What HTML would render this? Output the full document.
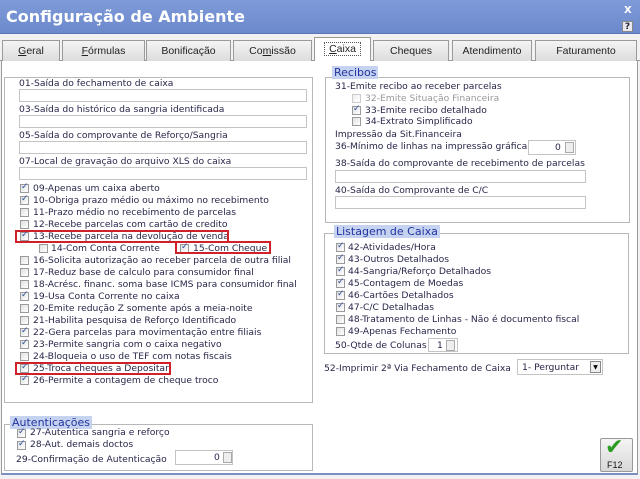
<!DOCTYPE html>
<html><head><meta charset="utf-8"><style>
*{margin:0;padding:0;box-sizing:border-box}
body{width:640px;height:479px;position:relative;overflow:hidden;background:#fff;font-family:"DejaVu Sans","Liberation Sans",sans-serif;font-size:9.2px;color:#27274a}
.a{position:absolute;white-space:nowrap}
.title{left:0;top:0;width:640px;height:34px;background:linear-gradient(#7e9ad8,#6c89cc);border-bottom:1px solid #5a76b8}
.tab{position:absolute;top:40px;height:21px;background:linear-gradient(#f4f4f4,#dcdcdc);border:1px solid #9a9a9a;border-bottom:none;font-family:"Liberation Sans",sans-serif;font-size:10.5px;color:#222;text-align:center;line-height:20px}
.box{position:absolute;border:1px solid #b8b8b8}
.inp{position:absolute;height:13px;border:1px solid #c4c4c4;background:#fff}
.cb{position:absolute;width:9px;height:9px;border:1px solid #9a9a9a;background:linear-gradient(135deg,#e0e0e0,#fff)}
.cb.k::after{content:"✓";position:absolute;left:0;top:-3px;font-size:9px;color:#3050a0;font-weight:bold}
.lg{position:absolute;background:#c5d3f0;color:#2233a0;font-size:11px;font-family:"DejaVu Sans",sans-serif;padding:0 2px;line-height:13px}
.red{position:absolute;border:2px solid #d0202a}
.spin{position:absolute;width:9px;height:11px;border:1px solid #aaa;background:#eee}
</style></head><body>
<div class="a title"></div>
<div class="a" style="left:6px;top:7px;font-family:'DejaVu Sans',sans-serif;font-weight:bold;font-size:16px;color:#fff">Configuração de Ambiente</div>
<div class="a" style="left:624px;top:5px;color:#fff;font-weight:bold;font-size:10px">X</div>
<div class="a" style="left:622px;top:21px;width:11px;height:11px;background:#e8e8ee;border:1px solid #888;font-size:9px;font-weight:bold;text-align:center;line-height:10px;color:#223">?</div>
<div class="a" style="left:0;top:34px;width:640px;height:445px;background:#f2f2f2"></div>
<div class="a" style="left:0;top:60px;width:640px;height:1px;background:#9a9a9a"></div>
<div class="tab" style="left:2px;width:58px"><u>G</u>eral</div>
<div class="tab" style="left:62px;width:83px"><u>F</u>órmulas</div>
<div class="tab" style="left:146px;width:85px">Bonificação</div>
<div class="tab" style="left:233px;width:79px">Co<u>m</u>issão</div>
<div class="tab" style="left:314px;top:37px;height:24px;width:57px;background:#fff;line-height:22px"><span style="border:1px dotted #555;padding:0 4px"><u>C</u>aixa</span></div>
<div class="tab" style="left:373px;width:76px">Cheques</div>
<div class="tab" style="left:452px;width:80px">Atendimento</div>
<div class="tab" style="left:535px;width:102px">Faturamento</div>
<div class="a" style="left:1px;top:61px;width:637px;height:414px;background:#fff;border-left:1px solid #9a9a9a;border-right:1px solid #9a9a9a;border-bottom:2px solid #7a90c0"></div>

<div class="box" style="left:4px;top:77px;width:309px;height:326px"></div>
<div class="a" style="left:19px;top:78px">01-Saída do fechamento de caixa</div><div class="inp" style="left:19px;top:89px;width:288px"></div>
<div class="a" style="left:19px;top:104px">03-Saída do histórico da sangria identificada</div><div class="inp" style="left:19px;top:115px;width:288px"></div>
<div class="a" style="left:19px;top:130px">05-Saída do comprovante de Reforço/Sangria</div><div class="inp" style="left:19px;top:141px;width:288px"></div>
<div class="a" style="left:19px;top:156px">07-Local de gravação do arquivo XLS do caixa</div><div class="inp" style="left:19px;top:167px;width:288px"></div>

<div class="cb k" style="left:20px;top:184px"></div><div class="a" style="left:33px;top:183px">09-Apenas um caixa aberto</div>
<div class="cb k" style="left:20px;top:196px"></div><div class="a" style="left:33px;top:195px">10-Obriga prazo médio ou máximo no recebimento</div>
<div class="cb" style="left:20px;top:208px"></div><div class="a" style="left:33px;top:207px">11-Prazo médio no recebimento de parcelas</div>
<div class="cb" style="left:20px;top:220px"></div><div class="a" style="left:33px;top:219px">12-Recebe parcelas com cartão de credito</div>
<div class="cb k" style="left:20px;top:232px"></div><div class="a" style="left:33px;top:231px">13-Recebe parcela na devolução de venda</div>
<div class="cb" style="left:39px;top:244px"></div><div class="a" style="left:51px;top:243px">14-Com Conta Corrente</div>
<div class="cb k" style="left:180px;top:244px"></div><div class="a" style="left:193px;top:243px">15-Com Cheque</div>
<div class="cb" style="left:20px;top:256px"></div><div class="a" style="left:33px;top:255px">16-Solicita autorização ao receber parcela de outra filial</div>
<div class="cb" style="left:20px;top:268px"></div><div class="a" style="left:33px;top:267px">17-Reduz base de calculo para consumidor final</div>
<div class="cb" style="left:20px;top:280px"></div><div class="a" style="left:33px;top:279px">18-Acrésc. financ. soma base ICMS para consumidor final</div>
<div class="cb k" style="left:20px;top:292px"></div><div class="a" style="left:33px;top:291px">19-Usa Conta Corrente no caixa</div>
<div class="cb" style="left:20px;top:304px"></div><div class="a" style="left:33px;top:303px">20-Emite redução Z somente após a meia-noite</div>
<div class="cb" style="left:20px;top:316px"></div><div class="a" style="left:33px;top:315px">21-Habilita pesquisa de Reforço Identificado</div>
<div class="cb k" style="left:20px;top:328px"></div><div class="a" style="left:33px;top:327px">22-Gera parcelas para movimentação entre filiais</div>
<div class="cb k" style="left:20px;top:340px"></div><div class="a" style="left:33px;top:339px">23-Permite sangria com o caixa negativo</div>
<div class="cb" style="left:20px;top:352px"></div><div class="a" style="left:33px;top:351px">24-Bloqueia o uso de TEF com notas fiscais</div>
<div class="cb k" style="left:20px;top:364px"></div><div class="a" style="left:33px;top:363px">25-Troca cheques a Depositar</div>
<div class="cb k" style="left:20px;top:376px"></div><div class="a" style="left:33px;top:375px">26-Permite a contagem de cheque troco</div>
<div class="red" style="left:15px;top:230px;width:214px;height:13px"></div>
<div class="red" style="left:175px;top:241px;width:96px;height:13px"></div>
<div class="red" style="left:15px;top:362px;width:156px;height:13px"></div>

<div class="box" style="left:4px;top:424px;width:309px;height:47px"></div>
<div class="lg" style="left:10px;top:416px">Autenticações</div>
<div class="cb k" style="left:17px;top:429px"></div><div class="a" style="left:30px;top:427px">27-Autentica sangria e reforço</div>
<div class="cb k" style="left:17px;top:441px"></div><div class="a" style="left:30px;top:439px">28-Aut. demais doctos</div>
<div class="a" style="left:16px;top:454px">29-Confirmação de Autenticação</div>
<div class="inp" style="left:175px;top:450px;width:58px;height:15px"></div><div class="a" style="left:214px;top:452px">0</div><div class="spin" style="left:223px;top:452px"></div>

<div class="box" style="left:325px;top:77px;width:305px;height:146px"></div>
<div class="lg" style="left:332px;top:66px">Recibos</div>
<div class="a" style="left:335px;top:81px">31-Emite recibo ao receber parcelas</div>
<div class="cb" style="left:352px;top:94px;opacity:.5"></div><div class="a" style="left:365px;top:93px;color:#999">32-Emite Situação Financeira</div>
<div class="cb k" style="left:352px;top:106px"></div><div class="a" style="left:365px;top:105px">33-Emite recibo detalhado</div>
<div class="cb" style="left:352px;top:117px"></div><div class="a" style="left:365px;top:116px">34-Extrato Simplificado</div>
<div class="a" style="left:335px;top:129px">Impressão da Sit.Financeira</div>
<div class="a" style="left:335px;top:141px">36-Mínimo de linhas na impressão gráfica</div>
<div class="inp" style="left:528px;top:140px;width:48px;height:15px"></div><div class="a" style="left:555px;top:142px">0</div><div class="spin" style="left:565px;top:142px"></div>
<div class="a" style="left:335px;top:158px">38-Saída do comprovante de recebimento de parcelas</div><div class="inp" style="left:335px;top:170px;width:251px"></div>
<div class="a" style="left:335px;top:185px">40-Saída do Comprovante de C/C</div><div class="inp" style="left:335px;top:196px;width:251px"></div>

<div class="box" style="left:324px;top:233px;width:305px;height:121px"></div>
<div class="lg" style="left:334px;top:225px">Listagem de Caixa</div>
<div class="cb k" style="left:336px;top:243px"></div><div class="a" style="left:348px;top:242px">42-Atividades/Hora</div>
<div class="cb k" style="left:336px;top:255px"></div><div class="a" style="left:348px;top:254px">43-Outros Detalhados</div>
<div class="cb k" style="left:336px;top:267px"></div><div class="a" style="left:348px;top:266px">44-Sangria/Reforço Detalhados</div>
<div class="cb k" style="left:336px;top:279px"></div><div class="a" style="left:348px;top:278px">45-Contagem de Moedas</div>
<div class="cb k" style="left:336px;top:291px"></div><div class="a" style="left:348px;top:290px">46-Cartões Detalhados</div>
<div class="cb k" style="left:336px;top:303px"></div><div class="a" style="left:348px;top:302px">47-C/C Detalhadas</div>
<div class="cb" style="left:336px;top:315px"></div><div class="a" style="left:348px;top:314px">48-Tratamento de Linhas - Não é documento fiscal</div>
<div class="cb" style="left:336px;top:327px"></div><div class="a" style="left:348px;top:326px">49-Apenas Fechamento</div>
<div class="a" style="left:335px;top:340px">50-Qtde de Colunas</div>
<div class="inp" style="left:428px;top:338px;width:30px;height:14px"></div><div class="a" style="left:437px;top:340px">1</div><div class="spin" style="left:446px;top:340px"></div>
<div class="a" style="left:324px;top:363px">52-Imprimir 2ª Via Fechamento de Caixa</div>
<div class="inp" style="left:517px;top:359px;width:86px;height:16px"></div><div class="a" style="left:522px;top:362px">1- Perguntar</div>
<div class="a" style="left:590px;top:361px;width:11px;height:12px;border:1px solid #888;background:#eee;font-size:6px;text-align:center;line-height:11px;color:#000">▼</div>

<div class="a" style="left:600px;top:438px;width:33px;height:34px;border:1px solid #999;border-radius:2px;background:linear-gradient(#f4f4f4,#d8d8d8)"></div>
<div class="a" style="left:605px;top:435px;font-size:22px;color:#2a9a20;font-weight:bold">✔</div>
<div class="a" style="left:607px;top:460px;font-family:'Liberation Sans',sans-serif;font-size:9px;color:#111">F12</div>
</body></html>
